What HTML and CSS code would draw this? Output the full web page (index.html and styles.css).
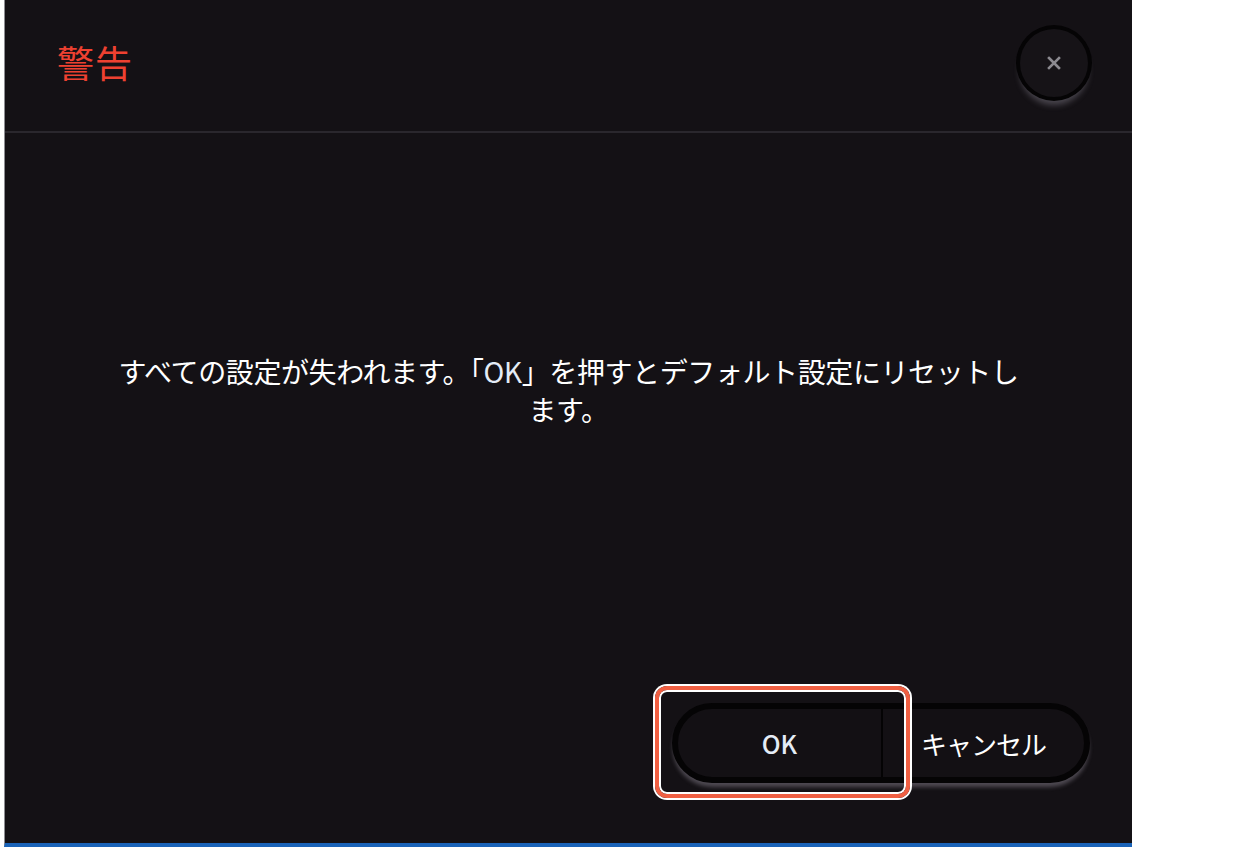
FILE: index.html
```html
<!DOCTYPE html>
<html lang="ja">
<head>
<meta charset="utf-8">
<link rel="stylesheet" href="styles.css">
</head>
<body>
<div class="dialog">
  <header class="header">
    <h1 class="title">警告</h1>
    <button class="close" aria-label="閉じる">
      <svg width="16" height="16" viewBox="0 0 16 16"><path d="M3 3L13 13M13 3L3 13" stroke="#8c8a90" stroke-width="2.6" stroke-linecap="square"/></svg>
    </button>
  </header>
  <main class="content">
    <p class="message">すべての設定が失われます。「<span class="ok-word">OK</span>」を押すとデフォルト設定にリセットし<br>ます。</p>
  </main>
  <footer class="footer">
    <div class="btn-group">
      <button class="btn btn-ok">OK</button>
      <button class="btn btn-cancel">キャンセル</button>
      <div class="highlight"></div>
    </div>
  </footer>
</div>
</body>
</html>
```
FILE: styles.css
```css
html, body {
  margin: 0;
  padding: 0;
  background: #ffffff;
}
body {
  font-family: "Noto Sans CJK JP", "Noto Sans", sans-serif;
}
.dialog {
  margin-left: 4px;
  width: 1127px;
  height: 843px;
  border-left: 1px solid #8d8d92;
  border-bottom: 4px solid #1a63b8;
  background: #141115;
  display: flex;
  flex-direction: column;
  box-sizing: content-box;
}
.header {
  height: 131px;
  border-bottom: 2px solid #2a272d;
  display: flex;
  align-items: center;
  justify-content: space-between;
  padding: 0 44px 0 52px;
}
.title {
  margin: 0;
  margin-top: -8px;
  font-size: 37px;
  font-weight: 400;
  color: #ee4131;
  letter-spacing: 1px;
}
.close {
  width: 68px;
  height: 68px;
  border-radius: 50%;
  border: none;
  margin-top: -5px;
  background: #161317;
  box-shadow: 0 0 0 4px #050405, 0 8px 6px rgba(140, 135, 148, 0.45);
  display: flex;
  align-items: center;
  justify-content: center;
  padding: 0;
}
.content {
  flex: 1;
  display: flex;
  align-items: center;
  justify-content: center;
  padding-bottom: 56px;
}
.message {
  margin: 0;
  color: #ffffff;
  font-size: 28px;
  line-height: 38px;
  text-align: center;
  letter-spacing: -0.4px;
}
.ok-word {
  color: #e4ecf6;
}
.footer {
  display: flex;
  justify-content: flex-end;
  padding: 0 42px 60px 0;
}
.btn-group {
  position: relative;
  display: flex;
  width: 406px;
  height: 68px;
  border: 6px solid #050405;
  border-radius: 40px;
  background: #131014;
  box-shadow: 0 5px 4px -1px rgba(150, 145, 158, 0.45);
}
.btn {
  border: none;
  background: transparent;
  font-family: "Noto Sans CJK JP", "Noto Sans", sans-serif;
  padding: 0;
  height: 100%;
}
.btn-ok {
  width: 205px;
  border-right: 2px solid #040304;
  color: #e4ecf6;
  font-size: 25px;
  font-weight: 500;
}
.btn-cancel {
  flex: 1;
  color: #ffffff;
  font-size: 26px;
  letter-spacing: -1px;
}
.highlight {
  position: absolute;
  left: -23px;
  top: -23px;
  width: 247px;
  height: 104px;
  border: 4px solid #f05f42;
  border-radius: 12px;
  box-shadow: 0 0 0 2px #ffffff, inset 0 0 0 2px #ffffff;
  pointer-events: none;
}
```
